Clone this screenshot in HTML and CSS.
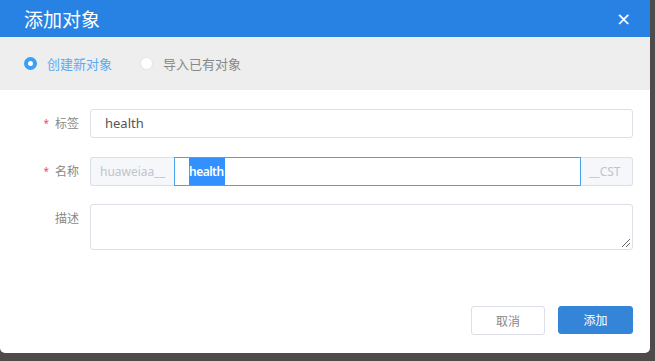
FILE: index.html
```html
<!DOCTYPE html>
<html lang="zh">
<head>
  <meta charset="UTF-8">
  <title>添加对象</title>
  <link rel="stylesheet" href="styles.css">
</head>
<body>
  <div class="dialog">
    <header>
      <h1>添加对象</h1>
      <button class="close">×</button>
    </header>

    <!-- 模式切换 -->
    <div class="modes">
      <label class="radio on"><span class="dot"></span>创建新对象</label>
      <label class="radio"><span class="dot"></span>导入已有对象</label>
    </div>

    <form class="form">
      <div class="row">
        <span class="lbl"><i>*</i>标签</span>
        <div class="field">health</div>
      </div>
      <div class="row">
        <span class="lbl"><i>*</i>名称</span>
        <div class="group">
          <span class="addon">huaweiaa__</span>
          <div class="field focus"><span class="sel">health</span></div>
          <span class="addon">__CST</span>
        </div>
      </div>
      <div class="row">
        <span class="lbl">描述</span>
        <div class="field area"><span class="grip"></span></div>
      </div>
    </form>

    <div class="actions">
      <button class="btn">取消</button>
      <button class="btn primary">添加</button>
    </div>
  </div>
</body>
</html>
```

FILE: styles.css
```css
:root {
  --blue:     #2882e4;
  --accent:   #3a9ff5;
  --border:   #dcdfe6;
  --addon:    #f5f7fa;
  --font:     "Noto Sans", "Noto Sans CJK SC", sans-serif;
}
* { box-sizing: border-box; margin:0; padding:0 }
body {
  background:#4f4b4b;
  font-family:var(--font);
  width:655px; height:361px; overflow:hidden;
}
.dialog {
  width:650px; height:353px;
  background:#fff;
  border-radius:0 0 5px 5px;
  display:flex; flex-direction:column;
}
header {
  height:37px;
  background:var(--blue);
  display:flex; align-items:center; justify-content:space-between;
  padding:0 19px 0 24px;
}
header h1 { color:#fff; font-size:19px; font-weight:400; }
.close {
  background:none; border:none; color:#fff;
  font-family:"DejaVu Sans", sans-serif;
  font-size:18px; line-height:1; cursor:pointer;
}
.modes {
  height:53px;
  background:#eeeeee;
  display:flex; align-items:center;
  padding-left:24px; gap:28px;
}
.radio {
  display:flex; align-items:center; gap:10px;
  font-size:13px; color:#888;
}
.radio .dot {
  width:13px; height:13px; border-radius:50%;
  background:#fff; border:1px solid #e4e4e8;
}
.radio.on { color:#5aaaf0; }
.radio.on .dot {
  background:#fff; border:4px solid var(--accent);
}

.form {
  padding:19px 17px 0 0;
  display:flex; flex-direction:column; gap:19px;
}
.row { display:flex; align-items:flex-start; }
.lbl {
  width:90px; padding-right:11px;
  text-align:right; font-size:12px; color:#888;
  line-height:29px;
}
.lbl i {
  color:#f05050; font-style:normal; font-size:10px;
  margin-right:6px; vertical-align:1px;
}
.field {
  flex:1; height:29px;
  border:1px solid var(--border); border-radius:3px;
  padding:0 14px; font-size:13px; color:#555;
  line-height:27px;
}
.group { flex:1; display:flex; height:29px; }
.addon {
  background:var(--addon);
  border:1px solid var(--border);
  color:#c0c4cc; font-size:12px; line-height:27px;
  padding:0 9px;
}
.addon:first-child { border-radius:3px 0 0 3px; border-right:none; width:84px; }
.addon:last-child { border-radius:0 3px 3px 0; border-left:none; width:52px; padding:0 8px; }
.field.focus {
  border:1px solid #4aa3ea; border-radius:0;
  padding-left:14px;
}
.sel {
  display:inline-block; background:#3390ff; color:#fff;
  font-size:12px; font-weight:600; letter-spacing:-0.5px;
  height:27px; padding:0 1px 0 0;
}
.row:last-child { margin-top:-1px; }
.field.area { height:46px; position:relative; }
.grip {
  position:absolute; right:2px; bottom:2px;
  width:8px; height:8px;
  background:linear-gradient(135deg, transparent 45%, #666 45%, #666 52%, transparent 52%, transparent 70%, #666 70%, #666 77%, transparent 77%);
}

.actions {
  margin-top:auto;
  display:flex; justify-content:flex-end; gap:13px;
  padding:0 17px 18px 0;
}
.btn {
  width:74px; height:29px;
  border:1px solid var(--border); border-radius:3px;
  background:#fff; color:#888;
  font-family:var(--font); font-size:12px; cursor:pointer;
}
.btn.primary {
  width:75px; height:28px;
  background:#3485d8; border-color:#3485d8; color:#fff;
}
```
